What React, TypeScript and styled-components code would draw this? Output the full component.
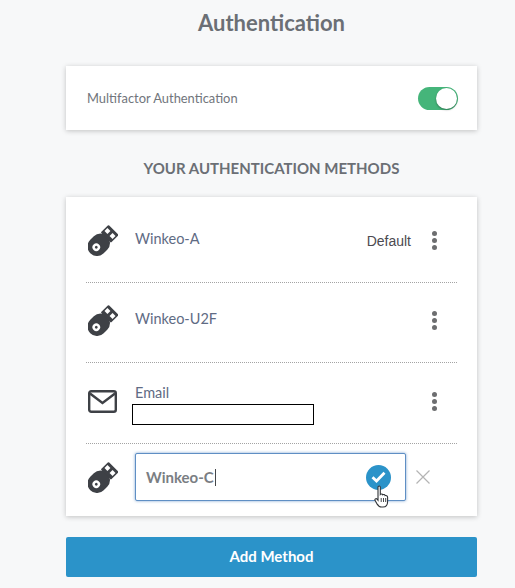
import React from 'react';
import styled, { createGlobalStyle } from 'styled-components';

interface Method {
  id: number;
  name: string;
  height: number;
  shift: number;
  isDefault?: boolean;
  redacted?: boolean;
}

const methods: Method[] = [
  { id: 1, name: 'Winkeo-A', height: 86, shift: 1, isDefault: true },
  { id: 2, name: 'Winkeo-U2F', height: 80, shift: -4 },
  { id: 3, name: 'Email', height: 81, shift: -4, redacted: true },
];

const GlobalStyle = createGlobalStyle`
  html, body {
    margin: 0;
    padding: 0;
    background: #f7f8f9;
    font-family: Lato, "Liberation Sans", sans-serif;
  }
`;

const Page = styled.div`
  width: 515px;
  height: 588px;
  overflow: hidden;
  box-sizing: border-box;
  padding: 0 38px 0 66px;
`;

const Title = styled.h1`
  margin: 0;
  height: 66px;
  padding-top: 9px;
  box-sizing: border-box;
  text-align: center;
  font-size: 22px;
  line-height: 28px;
  font-weight: 700;
  color: #6b6f75;
`;

const Card = styled.div`
  background: #fff;
  box-shadow: 0 1px 5px rgba(0, 0, 0, 0.22);
`;

const ToggleCard = styled(Card)`
  height: 64px;
  box-sizing: border-box;
  padding: 0 19px 0 21px;
  display: flex;
  align-items: center;
  justify-content: space-between;
`;

const ToggleLabel = styled.span`
  font-size: 12.9px;
  color: #71757c;
`;

const Toggle = styled.div`
  width: 40px;
  height: 23px;
  border-radius: 12px;
  background: #45b57a;
  display: flex;
  justify-content: flex-end;
  align-items: center;
  padding-right: 1px;
  box-sizing: border-box;
`;

const Knob = styled.div`
  width: 21px;
  height: 21px;
  border-radius: 50%;
  background: #fff;
  box-shadow: 0 1px 2px rgba(0, 0, 0, 0.35);
`;

const SectionHeading = styled.h2`
  margin: 0;
  height: 67px;
  line-height: 76px;
  text-align: center;
  font-size: 15px;
  font-weight: 700;
  color: #6b6f75;
`;

const MethodCard = styled(Card)`
  height: 319px;
  padding: 0 20px;
`;

const Row = styled.div<{ $height: number; $shift: number; $last?: boolean }>`
  height: ${(p) => p.$height}px;
  box-sizing: border-box;
  padding-top: ${(p) => Math.max(p.$shift, 0)}px;
  padding-bottom: ${(p) => Math.max(-p.$shift, 0)}px;
  display: flex;
  align-items: center;
  border-bottom: ${(p) => (p.$last ? 'none' : '1px dotted #a4a4a4')};
`;

const IconCell = styled.div`
  width: 49px;
  flex-shrink: 0;
  padding-left: 2px;
  box-sizing: border-box;
  display: flex;
`;

const Info = styled.div<{ $redacted?: boolean }>`
  flex: 1;
  display: flex;
  flex-direction: column;
  align-self: center;
  padding-top: ${(p) => (p.$redacted ? 10 : 0)}px;
  padding-bottom: 3px;
`;

const MethodName = styled.span`
  font-size: 14.5px;
  line-height: 18px;
  color: #5f6b84;
`;

const RedactedBox = styled.div`
  width: 180px;
  height: 19px;
  margin: 2px 0 0 -3px;
  border: 1px solid #000;
  background: #fff;
`;

const DefaultLabel = styled.span`
  font-family: "Liberation Sans", Arial, sans-serif;
  font-size: 14px;
  margin-top: 1px;
  color: #4c4a50;
`;

const Kebab = styled.div`
  width: 46px;
  flex-shrink: 0;
  display: flex;
  flex-direction: column;
  align-items: center;
  gap: 2px;
`;

const Dot = styled.span`
  width: 5px;
  height: 5px;
  border-radius: 50%;
  background: #6d6e70;
`;

const NameField = styled.div`
  position: relative;
  width: 271px;
  height: 48px;
  box-sizing: border-box;
  padding: 0 14px 0 10px;
  display: flex;
  align-items: center;
  justify-content: space-between;
  background: #fff;
  border: 1px solid #5f8fc4;
  border-radius: 2px;
  box-shadow: 0 0 3px rgba(66, 122, 190, 0.7);
`;

const FieldText = styled.span`
  font-size: 15px;
  font-weight: 700;
  color: #7a7e83;
`;

const Caret = styled.span`
  display: inline-block;
  width: 1px;
  height: 17px;
  margin-left: 1px;
  vertical-align: -3px;
  background: #44474a;
`;

const Confirm = styled.div`
  width: 25px;
  height: 25px;
  border-radius: 50%;
  background: #2b93c9;
  display: flex;
  align-items: center;
  justify-content: center;
`;

const Pointer = styled.svg`
  position: absolute;
  left: 238px;
  top: 31px;
`;

const Cancel = styled.svg`
  margin-left: 9px;
`;

const AddButton = styled.button`
  display: block;
  width: 100%;
  height: 40px;
  margin-top: 21px;
  padding: 0 0 2px;
  border: none;
  border-radius: 2px;
  background: #2b93c9;
  color: #fff;
  font-family: inherit;
  font-size: 15px;
  font-weight: 700;
`;

const UsbIcon: React.FC = () => (
  <svg width="30" height="31" viewBox="0 0 30 31">
    <g transform="rotate(-45 15 15.5)">
      <rect x="-3" y="6" width="24" height="19" rx="9.5" fill="#3e4146" />
      <rect x="19" y="8.3" width="11" height="14.4" rx="1" fill="#3e4146" />
      <rect x="22.8" y="9.8" width="4.2" height="4.2" fill="#fff" />
      <rect x="22.8" y="17" width="4.2" height="4.2" fill="#fff" />
      <circle cx="5.5" cy="15.5" r="3.8" fill="#fff" />
      <circle cx="5.5" cy="15.5" r="1.4" fill="#3e4146" />
    </g>
  </svg>
);

const MailIcon: React.FC = () => (
  <svg width="29" height="23" viewBox="0 0 29 23" fill="none">
    <rect x="1.2" y="1.2" width="26.6" height="20.6" rx="2" stroke="#3e4146" strokeWidth="2.4" />
    <path d="M2 3.5 14.5 13 27 3.5" stroke="#3e4146" strokeWidth="2.4" />
  </svg>
);

const App: React.FC = () => (
  <Page>
    <GlobalStyle />
    <Title>Authentication</Title>
    <ToggleCard>
      <ToggleLabel>Multifactor Authentication</ToggleLabel>
      <Toggle>
        <Knob />
      </Toggle>
    </ToggleCard>
    <SectionHeading>YOUR AUTHENTICATION METHODS</SectionHeading>
    <MethodCard>
      {methods.map((method) => (
        <Row key={method.id} $height={method.height} $shift={method.shift}>
          <IconCell>{method.redacted ? <MailIcon /> : <UsbIcon />}</IconCell>
          <Info $redacted={method.redacted}>
            <MethodName>{method.name}</MethodName>
            {method.redacted && <RedactedBox />}
          </Info>
          {method.isDefault && <DefaultLabel>Default</DefaultLabel>}
          <Kebab>
            <Dot />
            <Dot />
            <Dot />
          </Kebab>
        </Row>
      ))}
      <Row $height={72} $shift={-6} $last>
        <IconCell>
          <UsbIcon />
        </IconCell>
        <NameField>
          <FieldText>
            Winkeo-C
            <Caret />
          </FieldText>
          <Confirm>
            <svg width="15" height="12" viewBox="0 0 15 12" fill="none">
              <path d="M1.5 6.2 5.5 10 13.5 1.8" stroke="#fff" strokeWidth="2.8" />
            </svg>
          </Confirm>
          <Pointer width="15" height="23" viewBox="0 0 15 23">
            <path
              d="M4 2.2C4 .6 6.3 .6 6.3 2.2V9.5C7 8.7 8.4 8.8 8.8 9.8 9.6 9.2 10.9 9.5 11.1 10.6 12 10.2 13.6 10.6 13.6 12.3V16.5C13.6 19.5 12 22 9 22H7.5C5 22 4 20.6 2.8 18.6L1.1 15.5C.4 14.2 2 13 3.1 14.1L4 15.2Z"
              fill="#fff"
              stroke="#2f3236"
              strokeWidth="1.1"
            />
            <path d="M7.2 13V17M9.5 13V17M11.7 13V17" stroke="#2f3236" strokeWidth="0.9" />
          </Pointer>
        </NameField>
        <Cancel width="16" height="16" viewBox="0 0 16 16" fill="none">
          <path d="M1.5 1.5 14.5 14.5M14.5 1.5 1.5 14.5" stroke="#b4b4b4" strokeWidth="1.2" />
        </Cancel>
      </Row>
    </MethodCard>
    <AddButton>Add Method</AddButton>
  </Page>
);

export default App;
